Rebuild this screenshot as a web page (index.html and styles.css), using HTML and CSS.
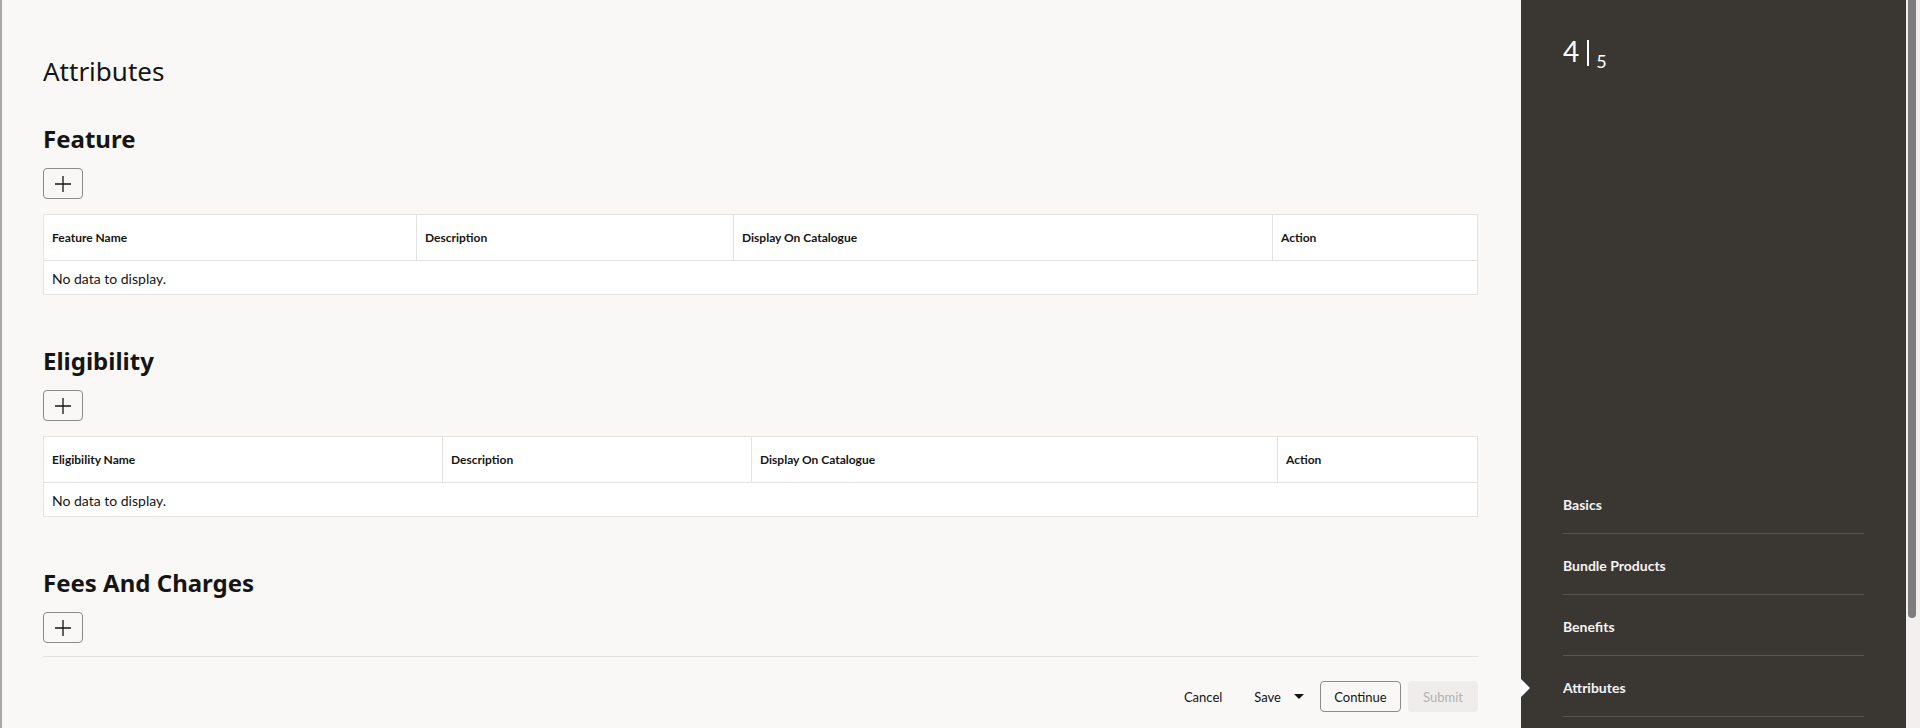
FILE: index.html
```html
<!DOCTYPE html>
<html lang="en">
<head>
    <meta charset="UTF-8">
    <title>Attributes</title>
    <link rel="stylesheet" href="styles.css">
</head>
<body>
    <div class="page">
        <main class="content">
            <h1 class="page-title">Attributes</h1>

            <section class="section">
                <h2>Feature</h2>
                <button class="add-btn" title="Add">
                    <svg width="18" height="18" viewBox="0 0 18 18"><path d="M9 1v16M1 9h16" stroke="#161513" stroke-width="1.3" fill="none"/></svg>
                </button>
                <table class="grid">
                    <colgroup>
                        <col style="width:373px">
                        <col style="width:317px">
                        <col style="width:539px">
                        <col>
                    </colgroup>
                    <thead>
                        <tr>
                            <th>Feature Name</th>
                            <th>Description</th>
                            <th>Display On Catalogue</th>
                            <th>Action</th>
                        </tr>
                    </thead>
                    <tbody>
                        <tr><td colspan="4">No data to display.</td></tr>
                    </tbody>
                </table>
            </section>

            <section class="section">
                <h2>Eligibility</h2>
                <button class="add-btn" title="Add">
                    <svg width="18" height="18" viewBox="0 0 18 18"><path d="M9 1v16M1 9h16" stroke="#161513" stroke-width="1.3" fill="none"/></svg>
                </button>
                <table class="grid">
                    <colgroup>
                        <col style="width:399px">
                        <col style="width:309px">
                        <col style="width:526px">
                        <col>
                    </colgroup>
                    <thead>
                        <tr>
                            <th>Eligibility Name</th>
                            <th>Description</th>
                            <th>Display On Catalogue</th>
                            <th>Action</th>
                        </tr>
                    </thead>
                    <tbody>
                        <tr><td colspan="4">No data to display.</td></tr>
                    </tbody>
                </table>
            </section>

            <section class="section section-last">
                <h2>Fees And Charges</h2>
                <button class="add-btn" title="Add">
                    <svg width="18" height="18" viewBox="0 0 18 18"><path d="M9 1v16M1 9h16" stroke="#161513" stroke-width="1.3" fill="none"/></svg>
                </button>
            </section>

            <div class="footer">
                <button class="btn btn-cancel">Cancel</button>
                <button class="btn btn-save">Save
                    <svg width="10" height="5" viewBox="0 0 10 5"><path d="M0 0h10L5 5z" fill="#161513"/></svg>
                </button>
                <button class="btn btn-outline">Continue</button>
                <button class="btn btn-disabled">Submit</button>
            </div>
        </main>

        <aside class="train">
            <div class="step">
                <span class="step-cur">4</span>
                <span class="step-sep"></span>
                <span class="step-total">5</span>
            </div>
            <ul class="train-nav">
                <li>Basics</li>
                <li>Bundle Products</li>
                <li>Benefits</li>
                <li class="active">Attributes</li>
            </ul>
        </aside>

        <div class="scrollbar"><div class="thumb"></div></div>
    </div>
</body>
</html>
```

FILE: styles.css
```css
body {
    margin: 0;
    font-family: Lato, "Noto Sans", sans-serif;
    color: #161513;
    background-color: #f9f8f6;
}
.page {
    display: flex;
    height: 728px;
    overflow: hidden;
}
.content {
    flex: 1;
    border-left: 2px solid #a9a8a6;
    padding: 55px 43px 0 41px;
    background-color: #f9f8f6;
}
.page-title {
    margin: 0 0 36px;
    font-family: "Noto Sans", Lato, sans-serif;
    font-size: 26px;
    font-weight: 400;
    line-height: 32px;
}
.section {
    margin-bottom: 50px;
}
.section h2 {
    margin: 0 0 13px;
    font-family: "Noto Sans", Lato, sans-serif;
    font-size: 24px;
    font-weight: 700;
    line-height: 32px;
}
.add-btn {
    display: flex;
    align-items: center;
    justify-content: center;
    width: 40px;
    height: 31px;
    padding: 0;
    background: transparent;
    border: 1px solid #8c8b89;
    border-radius: 4px;
    cursor: pointer;
}
.grid {
    width: 100%;
    margin-top: 15px;
    table-layout: fixed;
    border-collapse: separate;
    border-spacing: 0;
    background-color: #fff;
    border: 1px solid #e4e3e1;
}
.grid th {
    padding: 14px 8px;
    font-size: 12px;
    font-weight: 700;
    line-height: 17px;
    text-align: left;
    border-bottom: 1px solid #e4e3e1;
    border-right: 1px solid #e4e3e1;
}
.grid th:last-child {
    border-right: none;
}
.grid td {
    padding: 9px 8px 6px;
    font-size: 14px;
    line-height: 18px;
}
.section-last {
    margin-bottom: 13px;
}
.footer {
    display: flex;
    justify-content: flex-end;
    align-items: center;
    padding-top: 24px;
    border-top: 1px solid #e4e3e1;
}
.btn {
    height: 31px;
    padding: 0 12px;
    font-family: Lato, "Noto Sans", sans-serif;
    font-size: 13px;
    color: #161513;
    background: transparent;
    border: 1px solid transparent;
    border-radius: 4px;
    cursor: pointer;
}
.btn-cancel {
    margin-right: 6px;
}
.btn-save {
    display: flex;
    align-items: center;
    gap: 13px;
    margin-right: 3px;
}
.btn-outline {
    width: 81px;
    border-color: #8c8b89;
    margin-right: 7px;
}
.btn-disabled {
    width: 70px;
    background-color: #eeedeb;
    color: #b3b2b0;
    cursor: default;
}
.train {
    width: 385px;
    padding: 34px 42px 0;
    box-sizing: border-box;
    background-color: #3a3632;
    color: #fff;
}
.step {
    display: flex;
    align-items: flex-start;
}
.step-cur {
    font-size: 28px;
    line-height: 34px;
}
.step-sep {
    width: 2px;
    height: 26px;
    margin: 6px 7px 0 8px;
    background-color: #fff;
}
.step-total {
    margin-top: 16px;
    font-size: 18px;
    line-height: 22px;
}
.train-nav {
    list-style: none;
    margin: 401px 0 0;
    padding: 0;
}
.train-nav li {
    position: relative;
    padding: 23px 0 19px;
    font-size: 14px;
    font-weight: 700;
    line-height: 18px;
    color: #f5f4f2;
    border-bottom: 1px solid #57524c;
}
.train-nav li.active::before {
    content: "";
    position: absolute;
    left: -42px;
    top: 23px;
    border-top: 9px solid transparent;
    border-bottom: 9px solid transparent;
    border-left: 9px solid #fff;
}
.scrollbar {
    width: 14px;
    padding-left: 2px;
    box-sizing: border-box;
    background-color: #f1f0ee;
}
.thumb {
    width: 8px;
    height: 618px;
    border-radius: 0 0 4px 4px;
    background-color: #7d7d7d;
}
```
